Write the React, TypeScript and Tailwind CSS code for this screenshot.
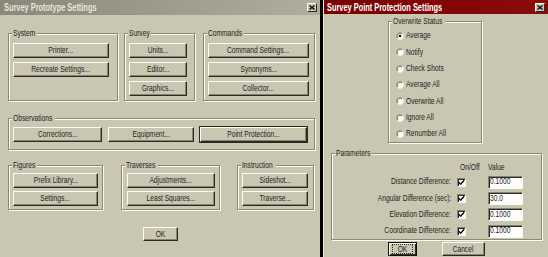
import type { ReactNode } from "react"

const overwriteOptions = ["Average", "Notify", "Check Shots", "Average All", "Overwrite All", "Ignore All", "Renumber All"]

const params = [
  { label: "Distance Difference:", value: "0.1000" },
  { label: "Angular Difference (sec):", value: "30.0" },
  { label: "Elevation Difference:", value: "0.1000" },
  { label: "Coordinate Difference:", value: "0.1000" },
]

// the old dialog font is very narrow, so squeeze Arial-width text
function T({ children, origin = "origin-center" }: { children: ReactNode; origin?: string }) {
  return <span className={`inline-block whitespace-nowrap scale-x-[0.74] ${origin}`}>{children}</span>
}

function Btn({ className = "", children, def = false }: { className?: string; children: ReactNode; def?: boolean }) {
  return (
    <button
      type="button"
      className={`${className} h-[15px] flex items-center justify-center bg-[#c9c6b1] border border-t-[#fbfaf3] border-l-[#fbfaf3] border-r-[#2b2a23] border-b-[#2b2a23] shadow-[inset_-1px_-1px_0_#86836e] ${def ? "outline outline-1 outline-[#2b2a23]" : ""}`}
    >
      <span className="leading-none">
        <T>{children}</T>
      </span>
    </button>
  )
}

function Group({ title, labelW, className = "", children }: { title: string; labelW: string; className?: string; children: ReactNode }) {
  return (
    <fieldset className={`${className} border border-[#8b8874] shadow-[inset_1px_1px_0_#fbfaf3,1px_1px_0_#fbfaf3]`}>
      <legend className={`${labelW} ml-[3px] px-[1px] leading-[10px] bg-[#c9c6b1] whitespace-nowrap`}>
        <T origin="origin-left">{title}</T>
      </legend>
      {children}
    </fieldset>
  )
}

function CloseBox() {
  return (
    <div className="w-[10px] h-[9px] flex items-center justify-center bg-[#c9c6b1] border border-t-[#fbfaf3] border-l-[#fbfaf3] border-r-[#2b2a23] border-b-[#2b2a23]">
      <svg width="6" height="5" viewBox="0 0 6 5">
        <path d="M0.5 0.5 L5.5 4.5 M5.5 0.5 L0.5 4.5" stroke="#111" strokeWidth="1.4" />
      </svg>
    </div>
  )
}

function Radio({ checked }: { checked: boolean }) {
  return (
    <svg width="8" height="8" viewBox="0 0 12 12">
      <circle cx="6" cy="6" r="5.5" fill="#fff" />
      <path d="M2.1 9.9 A5.5 5.5 0 0 1 9.9 2.1" fill="none" stroke="#86836e" strokeWidth="1" />
      <path d="M3 9 A4.2 4.2 0 0 1 9 3" fill="none" stroke="#2b2a23" strokeWidth="1" />
      <path d="M9.9 2.1 A5.5 5.5 0 0 1 2.1 9.9" fill="none" stroke="#e8e6da" strokeWidth="1" />
      {checked && <circle cx="6" cy="6" r="2" fill="#111" />}
    </svg>
  )
}

function Check() {
  return (
    <div className="w-[9px] h-[9px] bg-white border border-t-[#86836e] border-l-[#86836e] border-r-[#fbfaf3] border-b-[#fbfaf3] shadow-[inset_1px_1px_0_#2b2a23] flex items-center justify-center">
      <svg width="7" height="7" viewBox="0 0 7 7">
        <path d="M0.8 3.2 L2.7 5.2 L6.2 1.2" fill="none" stroke="#111" strokeWidth="1.5" />
      </svg>
    </div>
  )
}

export default function App() {
  return (
    <div className="w-[548px] h-[257px] flex bg-black overflow-hidden font-['Liberation_Sans',Arial,sans-serif] text-[9px] text-[#24241f]">
      {/* Survey Prototype Settings */}
      <div className="w-[320px] h-full flex flex-col bg-[#c9c6b1]">
        <div className="h-[15px] flex items-center justify-between pl-[4px] pr-[3px] bg-linear-to-r from-[#8a8878] to-[#b0ae9d] text-[#e6e5dc] font-bold text-[10px]">
          <T origin="origin-left">Survey Prototype Settings</T>
          <CloseBox />
        </div>

        <div className="flex flex-col pl-[8px] pt-[13px]">
          <div className="flex">
            <Group title="System" labelW="w-[25px]" className="w-[110px]">
              <div className="flex flex-col gap-[4px] pl-[4px] pt-[5px] pb-[4px]">
                <Btn className="w-[96px]">Printer...</Btn>
                <Btn className="w-[96px]">Recreate Settings...</Btn>
              </div>
            </Group>
            <Group title="Survey" labelW="w-[23px]" className="ml-[6px] w-[71px]">
              <div className="flex flex-col gap-[4px] pl-[4px] pt-[5px] pb-[4px]">
                <Btn className="w-[58px]">Units...</Btn>
                <Btn className="w-[58px]">Editor...</Btn>
                <Btn className="w-[58px]">Graphics...</Btn>
              </div>
            </Group>
            <Group title="Commands" labelW="w-[37px]" className="ml-[8px] w-[112px]">
              <div className="flex flex-col gap-[4px] pl-[4px] pt-[5px] pb-[4px]">
                <Btn className="w-[101px]">Command Settings...</Btn>
                <Btn className="w-[101px]">Synonyms...</Btn>
                <Btn className="w-[101px]">Collector...</Btn>
              </div>
            </Group>
          </div>

          <Group title="Observations" labelW="w-[43px]" className="mt-[12px] w-[307px]">
            <div className="flex gap-[6px] pl-[4px] pt-[4px] pb-[7px]">
              <Btn className="w-[89px]">Corrections...</Btn>
              <Btn className="w-[86px]">Equipment...</Btn>
              <Btn className="w-[107px]" def>
                Point Protection...
              </Btn>
            </div>
          </Group>

          <div className="mt-[10px] flex">
            <Group title="Figures" labelW="w-[25px]" className="w-[95px]">
              <div className="flex flex-col gap-[3px] pl-[4px] pt-[3px] pb-[3px]">
                <Btn className="w-[85px]">Prefix Library...</Btn>
                <Btn className="w-[85px]">Settings...</Btn>
              </div>
            </Group>
            <Group title="Traverses" labelW="w-[33px]" className="ml-[18px] w-[99px]">
              <div className="flex flex-col gap-[3px] pl-[5px] pt-[3px] pb-[3px]">
                <Btn className="w-[88px]">Adjustments...</Btn>
                <Btn className="w-[88px]">Least Squares...</Btn>
              </div>
            </Group>
            <Group title="Instruction" labelW="w-[35px]" className="ml-[17px] w-[77px]">
              <div className="flex flex-col gap-[3px] pl-[4px] pt-[3px] pb-[3px]">
                <Btn className="w-[66px]">Sideshot...</Btn>
                <Btn className="w-[66px]">Traverse...</Btn>
              </div>
            </Group>
          </div>

          <Btn className="mt-[17px] ml-[135px] w-[35px] !h-[14px]">OK</Btn>
        </div>
      </div>

      {/* Survey Point Protection Settings */}
      <div className="ml-[3px] w-[225px] h-full flex flex-col bg-[#c9c6b1] border-l border-[#e9e7dc]">
        <div className="h-[14px] flex items-center justify-between pl-[3px] pr-[3px] bg-linear-to-r from-[#7a0000] to-[#8a0c0c] text-white font-bold text-[10px]">
          <T origin="origin-left">Survey Point Protection Settings</T>
          <CloseBox />
        </div>

        <Group title="Overwrite Status" labelW="w-[53px]" className="mt-[2px] ml-[64px] w-[94px]">
          <div className="flex flex-col pl-[7px] pt-[2px]">
            {overwriteOptions.map((o, i) => (
              <div key={o} className="h-[16.3px] flex items-center gap-[2px]">
                <Radio checked={i === 0} />
                <T origin="origin-left">{o}</T>
              </div>
            ))}
          </div>
        </Group>

        <Group title="Parameters" labelW="w-[36px]" className="mt-[5px] ml-[7px] w-[211px]">
          <div className="grid grid-cols-[119px_37px_35px] pt-[4px]">
            <div className="h-[12px]" />
            <div className="h-[12px] pl-[9px] flex items-center">
              <T origin="origin-left">On/Off</T>
            </div>
            <div className="h-[12px] flex items-center">
              <T origin="origin-left">Value</T>
            </div>
            {params.map((p) => (
              <div key={p.label} className="contents">
                <div className="h-[16.3px] flex items-center justify-end">
                  <T origin="origin-right">{p.label}</T>
                </div>
                <div className="h-[16.3px] pl-[6px] flex items-center">
                  <Check />
                </div>
                <div className="h-[16.3px] flex items-center">
                  <div className="w-[35px] h-[13px] bg-white border border-t-[#86836e] border-l-[#86836e] border-r-[#fbfaf3] border-b-[#fbfaf3] shadow-[inset_1px_1px_0_#2b2a23] pl-[1px] flex items-center">
                    <T origin="origin-left">{p.value}</T>
                  </div>
                </div>
              </div>
            ))}
          </div>
        </Group>

        <div className="mt-[2px] ml-[64px] flex">
          <button
            type="button"
            className="w-[29px] h-[14px] flex items-center justify-center bg-[#c9c6b1] border border-[#111] shadow-[inset_1px_1px_0_#fbfaf3,inset_-1px_-1px_0_#2b2a23]"
          >
            <span className="w-[19px] h-[8px] flex items-center justify-center leading-none outline outline-1 outline-dotted outline-[#333]">
              <T>OK</T>
            </span>
          </button>
          <Btn className="ml-[25px] w-[43px] !h-[14px]">Cancel</Btn>
        </div>
      </div>
    </div>
  )
}
